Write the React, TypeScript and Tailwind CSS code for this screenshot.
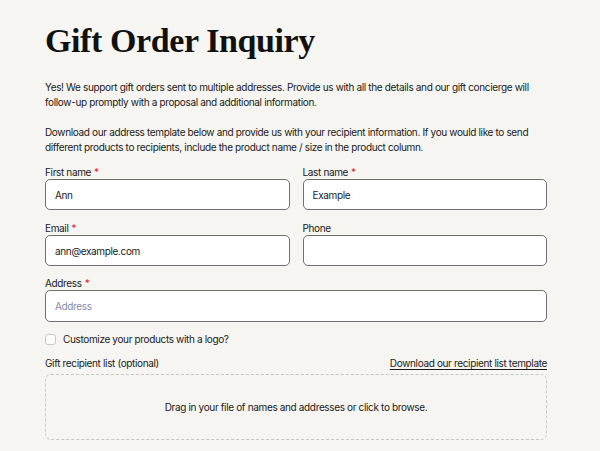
import React, { useState } from 'react';

const inputCls =
    'w-full rounded-[5px] border-[1.5px] border-[#707070] bg-white px-[9px] text-[10px] tracking-[-0.35px] text-[#1a1a1a] placeholder-[#8a8aa3] outline-none';

function Field({ label, required, value, placeholder, tall }: { label: string; required?: boolean; value?: string; placeholder?: string; tall?: boolean }) {
    const [val, setVal] = useState(value ?? '');
    return (
        <div className="flex flex-col">
            <label className="text-[10px] leading-[14px] tracking-[-0.35px] text-[#1a1a1a]">
                {label}
                {required && <span className="ml-[3px] text-[#e0242b]">*</span>}
            </label>
            <input
                className={`${inputCls} ${tall ? 'h-[32px]' : 'h-[31px]'}`}
                value={val}
                placeholder={placeholder}
                onChange={(e) => setVal(e.target.value)}
            />
        </div>
    );
}

export default function App() {
    return (
        <div className="min-h-screen bg-[#f6f5f1] font-['Inter','Liberation_Sans',sans-serif] text-[#1a1a1a]">
            <div className="ml-[45px] w-[502px] pt-[21px]">
                <h1 className="font-['Liberation_Serif',serif] text-[34px] font-bold leading-[40px] tracking-[-0.4px] text-[#111]">
                    Gift Order Inquiry
                </h1>

                <div className="mt-[19px] space-y-[15px] text-[10px] leading-[15px] tracking-[-0.35px]">
                    <p>
                        Yes! We support gift orders sent to multiple addresses. Provide us with all the details and our gift concierge will
                        follow-up promptly with a proposal and additional information.
                    </p>
                    <p>
                        Download our address template below and provide us with your recipient information. If you would like to send
                        different products to recipients, include the product name / size in the product column.
                    </p>
                </div>

                <form className="mt-[10px] flex flex-col gap-[10px] text-[10px] tracking-[-0.35px]">
                    <div className="grid grid-cols-2 gap-x-[13px] gap-y-[11px]">
                        <Field label="First name" required value="Ann" />
                        <Field label="Last name" required value="Example" />
                        <Field label="Email" required value="ann@example.com" />
                        <Field label="Phone" />
                    </div>
                    <Field label="Address" required placeholder="Address" tall />

                    <label className="flex h-[14px] items-center gap-[7px]">
                        <input type="checkbox" className="h-[11px] w-[11px] appearance-none rounded-[3px] border border-[#c6c6c6] bg-white" />
                        Customize your products with a logo?
                    </label>

                    <div className="flex flex-col gap-[4px]">
                        <div className="flex items-center justify-between leading-[14px]">
                            <span>Gift recipient list (optional)</span>
                            <a href="#" className="underline underline-offset-2">
                                Download our recipient list template
                            </a>
                        </div>
                        <div className="flex h-[66px] items-center justify-center rounded-[6px] border border-dashed border-[#c6c6c6]">
                            Drag in your file of names and addresses or click to browse.
                        </div>
                    </div>
                </form>
            </div>
        </div>
    );
}
